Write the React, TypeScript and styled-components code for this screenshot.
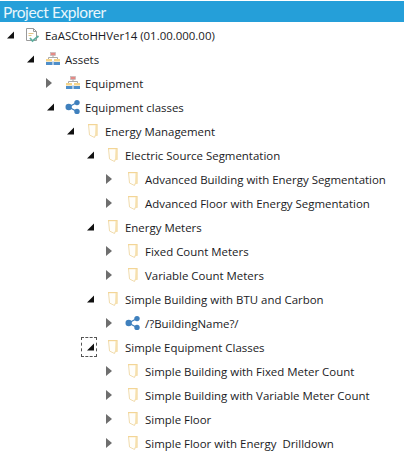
import styled, { createGlobalStyle } from "styled-components";

type Kind = "doc" | "assets" | "share" | "folder";

interface INode {
  label: string;
  level: number;
  kind: Kind;
  open?: boolean;
  focused?: boolean;
}

const nodes: INode[] = [
  { label: "EaASCtoHHVer14 (01.00.000.00)", level: 0, kind: "doc", open: true },
  { label: "Assets", level: 1, kind: "assets", open: true },
  { label: "Equipment", level: 2, kind: "assets" },
  { label: "Equipment classes", level: 2, kind: "share", open: true },
  { label: "Energy Management", level: 3, kind: "folder", open: true },
  { label: "Electric Source Segmentation", level: 4, kind: "folder", open: true },
  { label: "Advanced Building with Energy Segmentation", level: 5, kind: "folder" },
  { label: "Advanced Floor with Energy Segmentation", level: 5, kind: "folder" },
  { label: "Energy Meters", level: 4, kind: "folder", open: true },
  { label: "Fixed Count Meters", level: 5, kind: "folder" },
  { label: "Variable Count Meters", level: 5, kind: "folder" },
  { label: "Simple Building with BTU and Carbon", level: 4, kind: "folder", open: true },
  { label: "/?BuildingName?/", level: 5, kind: "share" },
  { label: "Simple Equipment Classes", level: 4, kind: "folder", open: true, focused: true },
  { label: "Simple Building with Fixed Meter Count", level: 5, kind: "folder" },
  { label: "Simple Building with Variable Meter Count", level: 5, kind: "folder" },
  { label: "Simple Floor", level: 5, kind: "folder" },
  { label: "Simple Floor with Energy  Drilldown", level: 5, kind: "folder" },
];

const DocIcon = () => (
  <svg width="16" height="16" viewBox="0 0 16 16">
    <path d="M1.5 1.5h7l3 3v9h-10z" fill="#fff" stroke="#9a9a9a" />
    <path d="M8.5 1.5v3h3" fill="none" stroke="#9a9a9a" />
    <path d="M3.5 6.5h5M3.5 8.5h3" stroke="#e0c48a" />
    <path d="M5 11l2.5 3L13.5 9" fill="none" stroke="#5fae9f" strokeWidth="1.8" />
  </svg>
);

const AssetsIcon = () => (
  <svg width="16" height="16" viewBox="0 0 16 16">
    <rect x="5.5" y="1.5" width="5" height="3" fill="#e58a86" stroke="#b9b9b9" strokeWidth="0.6" />
    <path d="M8 4.5v2M3.5 8V6.5h9V8" fill="none" stroke="#a9a9a9" />
    <rect x="1" y="8" width="6" height="2.5" fill="#f5d48a" />
    <rect x="9" y="8" width="6" height="2.5" fill="#f5d48a" />
    <rect x="1" y="11" width="6" height="3" fill="#4f8fca" />
    <rect x="9" y="11" width="6" height="3" fill="#4f8fca" />
    <rect x="7" y="10.5" width="2" height="3.5" fill="#a9c8e6" />
  </svg>
);

const ShareIcon = () => (
  <svg width="16" height="16" viewBox="0 0 16 16">
    <path d="M3.5 8L12 3.5M3.5 8l8.5 4.5" stroke="#3f80bd" strokeWidth="1.4" />
    <circle cx="3.7" cy="8" r="3.2" fill="#3f80bd" />
    <circle cx="12" cy="3.6" r="2.7" fill="#3f80bd" />
    <circle cx="12" cy="12.4" r="2.7" fill="#3f80bd" />
  </svg>
);

const FolderIcon = () => (
  <svg width="16" height="16" viewBox="0 0 16 16">
    <path d="M3.5 1.5h8.5v11h-2l-.5 2-5-2.5z" fill="#fffefa" stroke="#f1dcae" />
    <path d="M3 1h9.5v1.2H3z" fill="#f3d596" />
    <path d="M10.5 2h2v11h-2l-.5 1.5z" fill="#f6e0ad" />
  </svg>
);

const icons: Record<Kind, () => React.JSX.Element> = {
  doc: DocIcon,
  assets: AssetsIcon,
  share: ShareIcon,
  folder: FolderIcon,
};

const App = () => {
  return (
    <Panel>
      <GlobalStyle />
      <Header>Project Explorer</Header>
      <Tree>
        {nodes.map((node) => {
          const Icon = icons[node.kind];
          return (
            <Row key={node.label} $level={node.level}>
              <Toggle $focused={node.focused}>
                <svg width="10" height="10" viewBox="0 0 10 10">
                  {node.open ? (
                    <path d="M10 1.5V8.5H3z" fill="#111" />
                  ) : (
                    <path d="M2 0L8 5 2 10z" fill="#6e6e6e" />
                  )}
                </svg>
              </Toggle>
              <IconSlot>
                <Icon />
              </IconSlot>
              <Label>{node.label}</Label>
            </Row>
          );
        })}
      </Tree>
    </Panel>
  );
};

const GlobalStyle = createGlobalStyle`
  html, body {
    margin: 0;
    background: #ffffff;
  }
`;

const Panel = styled.div`
  width: 404px;
  height: 458px;
  overflow: hidden;
  font-family: "Open Sans", "Noto Sans", sans-serif;
  background-color: #ffffff;
`;

const Header = styled.div`
  height: 21px;
  margin-top: 1px;
  padding-left: 3px;
  background-color: #259fd9;
  color: #e8f6fc;
  font-family: Lato, "Open Sans", sans-serif;
  font-size: 15.5px;
  letter-spacing: -0.4px;
  line-height: 22px;
  white-space: nowrap;
`;

const Tree = styled.div`
  display: flex;
  flex-direction: column;
  padding-top: 1px;
`;

const Row = styled.div<{ $level: number }>`
  display: flex;
  align-items: center;
  height: 24px;
  padding-left: ${(p) => 1 + p.$level * 20}px;
`;

const Toggle = styled.span<{ $focused?: boolean }>`
  display: flex;
  align-items: center;
  justify-content: center;
  width: 16px;
  height: ${(p) => (p.$focused ? "20px" : "16px")};
  box-sizing: border-box;
  flex-shrink: 0;
  outline: ${(p) => (p.$focused ? "1px dashed #555" : "none")};
  outline-offset: -1px;
`;

const IconSlot = styled.span`
  display: flex;
  width: 16px;
  height: 16px;
  margin-left: 8px;
  flex-shrink: 0;
`;

const Label = styled.span`
  margin-left: 4px;
  font-size: 11.45px;
  color: #1a1a24;
  white-space: pre;
`;

export default App;
